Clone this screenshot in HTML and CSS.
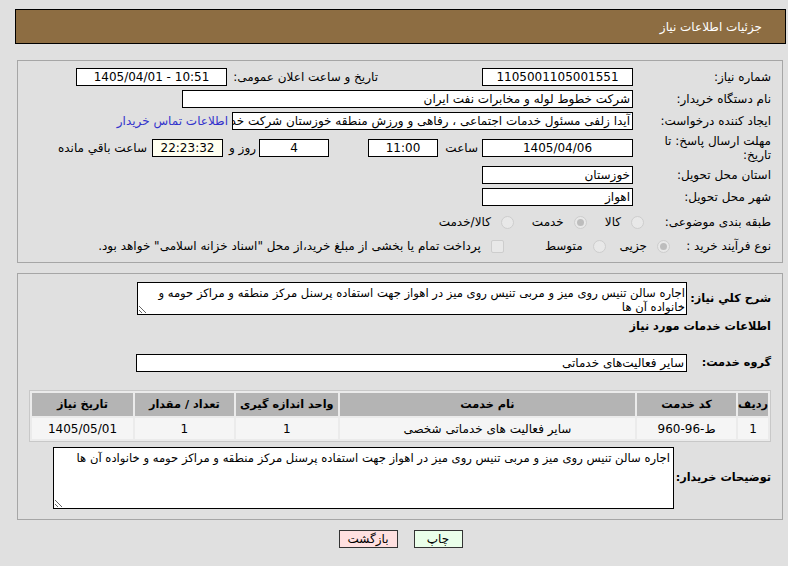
FILE: index.html
```html
<!DOCTYPE html>
<html lang="fa" dir="rtl">
<head>
    <meta charset="UTF-8">
    <title>جزئیات اطلاعات نیاز</title>
    <link rel="stylesheet" href="styles.css">
</head>
<body>
    <div class="page">
        <div class="header"><span>جزئیات اطلاعات نیاز</span></div>

        <div class="panel info">
            <div class="row">
                <span class="lbl">شماره نیاز:</span>
                <span class="box w149 center">1105001105001551</span>
                <span class="lbl lbl-date">تاریخ و ساعت اعلان عمومی:</span>
                <span class="box w149 center" dir="ltr">1405/04/01 - 10:51</span>
            </div>
            <div class="row">
                <span class="lbl">نام دستگاه خریدار:</span>
                <span class="box w449">شرکت خطوط لوله و مخابرات نفت ایران</span>
            </div>
            <div class="row">
                <span class="lbl">ایجاد کننده درخواست:</span>
                <span class="box w399">آیدا زلفی مسئول خدمات اجتماعی ، رفاهی و ورزش منطقه خوزستان شرکت خدمات پشتیبانی</span>
                <a class="contact" href="#">اطلاعات تماس خریدار</a>
            </div>
            <div class="row tall">
                <span class="lbl">مهلت ارسال پاسخ: تا تاریخ:</span>
                <span class="box w149 center">1405/04/06</span>
                <span class="mini">ساعت</span>
                <span class="box w68 center">11:00</span>
                <span class="box w68 center gap">4</span>
                <span class="mini days">روز و</span>
                <span class="box w69 center remain">22:23:32</span>
                <span class="left-text">ساعت باقي مانده</span>
            </div>
            <div class="row">
                <span class="lbl">استان محل تحویل:</span>
                <span class="box w149">خوزستان</span>
            </div>
            <div class="row">
                <span class="lbl">شهر محل تحویل:</span>
                <span class="box w149">اهواز</span>
            </div>
            <div class="row choice first-choice">
                <span class="lbl">طبقه بندی موضوعی:</span>
                <div class="opts cat">
                    <label class="opt"><input type="radio" class="radio" disabled>کالا</label>
                    <label class="opt"><input type="radio" class="radio" checked disabled>خدمت</label>
                    <label class="opt"><input type="radio" class="radio" disabled>کالا/خدمت</label>
                </div>
            </div>
            <div class="row choice last">
                <span class="lbl">نوع فرآیند خرید :</span>
                <div class="opts proc">
                    <label class="opt"><input type="radio" class="radio" checked disabled>جزیی</label>
                    <label class="opt wide"><input type="radio" class="radio" disabled>متوسط</label>
                    <label class="opt"><input type="checkbox" class="check" disabled>پرداخت تمام یا بخشی از مبلغ خرید،از محل "اسناد خزانه اسلامی" خواهد بود.</label>
                </div>
            </div>
        </div>

        <div class="panel detail">
            <div class="row">
                <span class="lbl bold w84">شرح کلي نیاز:</span>
                <textarea class="area desc" readonly>اجاره سالن تنیس روی میز و مربی تنیس روی میز در اهواز جهت استفاده پرسنل مرکز منطقه و مراکز حومه و خانواده آن ها</textarea>
            </div>
            <div class="section-title">اطلاعات خدمات مورد نیاز</div>
            <div class="row">
                <span class="lbl bold w84">گروه خدمت:</span>
                <span class="box w549">سایر فعالیت‌های خدماتی</span>
            </div>

            <table class="items">
                <thead>
                    <tr>
                        <th class="c-idx">ردیف</th>
                        <th class="c-code">کد خدمت</th>
                        <th class="c-name">نام خدمت</th>
                        <th class="c-unit">واحد اندازه گیری</th>
                        <th class="c-qty">تعداد / مقدار</th>
                        <th class="c-date">تاریخ نیاز</th>
                    </tr>
                </thead>
                <tbody>
                    <tr>
                        <td>1</td>
                        <td><bdo dir="ltr">960-96-ط</bdo></td>
                        <td>سایر فعالیت های خدماتی شخصی</td>
                        <td>1</td>
                        <td>1</td>
                        <td>1405/05/01</td>
                    </tr>
                </tbody>
            </table>

            <div class="row last">
                <span class="lbl bold w93">توضیحات خریدار:</span>
                <textarea class="area notes" readonly>اجاره سالن تنیس روی میز و مربی تنیس روی میز در اهواز جهت استفاده پرسنل مرکز منطقه و مراکز حومه و خانواده آن ها</textarea>
            </div>
        </div>

        <div class="actions">
            <button class="btn print">چاپ</button>
            <button class="btn back">بازگشت</button>
        </div>
    </div>
</body>
</html>
```

FILE: styles.css
```css
body {
    margin: 0;
    background: #e0e0e0;
    font-family: "DejaVu Sans", sans-serif;
    font-size: 12px;
    color: #000;
}

.page {
    padding: 9px 2px 0 15px;
}

.header {
    height: 33px;
    background: #8d6d42;
    border: 1px solid #000;
    display: flex;
    align-items: center;
    padding-right: 23px;
    color: #fff;
    font-size: 12px;
}

.panel {
    border: 1px solid #a6a6a6;
    margin-left: 2px;
    margin-right: 3px;
    padding: 7px 11px 6px 10px;
}

.info {
    margin-top: 16px;
}

.detail {
    margin-top: 10px;
    padding-top: 8px;
    padding-bottom: 10px;
}

.row {
    display: flex;
    align-items: center;
    min-height: 18px;
    margin-bottom: 4px;
}

.row.last {
    margin-bottom: 0;
}

.row.tall {
    min-height: 28px;
}

.row.choice {
    min-height: 20px;
}

.row.first-choice {
    margin-top: 6px;
}

.lbl {
    width: 134px;
    flex-shrink: 0;
    margin-left: 4px;
    line-height: 14px;
}

.lbl-date {
    width: 147px;
    margin-right: 104px;
    margin-left: 4px;
}

.box {
    display: block;
    height: 16px;
    line-height: 16px;
    border: 1px solid #000;
    background: #fff;
    padding: 0 2px;
    white-space: nowrap;
    overflow: hidden;
    box-sizing: content-box;
}

.center {
    text-align: center;
}

.w149 { width: 145px; }
.w449 { width: 445px; }
.w399 { width: 395px; }
.w68 { width: 64px; }
.w69 { width: 65px; }
.w549 { width: 545px; }

.gap {
    margin-right: 39px;
}

.remain {
    background: #fffff0;
}

.mini {
    width: 44px;
    padding-right: 4px;
    box-sizing: border-box;
}

.days {
    width: 36px;
    padding-right: 3px;
}

.left-text {
    margin-right: 5px;
}

.contact {
    color: #3333cc;
    text-decoration: none;
    margin-right: 4px;
    white-space: nowrap;
}

.opts {
    display: flex;
    align-items: center;
    height: 20px;
}

.opt {
    display: flex;
    align-items: center;
    white-space: nowrap;
}

.cat {
    margin-right: -11px;
}

.cat .opt {
    margin-left: 18px;
}

.proc {
    margin-right: -37px;
}

.proc .opt {
    margin-left: 14px;
}

.proc .opt.wide {
    margin-left: 41px;
}

.radio,
.check {
    appearance: none;
    -webkit-appearance: none;
    width: 13px;
    height: 13px;
    margin: 0 0 0 10px;
    border: 1px solid #cdcdcd;
    background: #e8e8e8;
    box-sizing: border-box;
    position: relative;
}

.radio {
    border-radius: 50%;
}

.check {
    border-radius: 2px;
}

.radio:checked::after {
    content: "";
    position: absolute;
    top: 2px;
    left: 2px;
    width: 7px;
    height: 7px;
    border-radius: 50%;
    background: #bdbdbd;
}

.bold {
    font-weight: bold;
    font-size: 11.3px;
    white-space: nowrap;
}

.w84 { width: 80px; }
.w93 { width: 93px; }

.area {
    font-family: "DejaVu Sans", sans-serif;
    font-size: 11.6px;
    line-height: 14px;
    border: 1px solid #000;
    background: #fff;
    padding: 3px 1px 0;
    margin: 0;
    direction: rtl;
    overflow: hidden;
}

.desc {
    width: 546px;
    height: 28px;
}

.notes {
    width: 615px;
    height: 57px;
    padding-right: 3px;
}

.section-title {
    font-weight: bold;
    font-size: 11.3px;
    line-height: 16px;
    margin: 1px 0 19px;
}

.items {
    border: 1px solid #c8c8c8;
    border-spacing: 2px;
    background: #ebebeb;
    margin: 18px 0 5px 14px;
    width: 742px;
    font-size: 12px;
}

.items th {
    background: #b4b4b4;
    height: 23px;
    padding: 0;
    font-size: 11.3px;
}

.items td {
    background: #f5f5f5;
    height: 21px;
    padding: 0;
    text-align: center;
}

.c-idx { width: 29px; }
.c-code { width: 99px; }
.c-name { width: 296px; }
.c-unit { width: 102px; }
.c-qty { width: 99px; }
.c-date { width: 101px; }

.actions {
    display: flex;
    justify-content: center;
    gap: 16px;
    margin-top: 10px;
}

.btn {
    font-family: "DejaVu Sans", sans-serif;
    font-size: 12px;
    height: 18px;
    padding: 0;
    border: 1px solid #333;
    color: #000;
}

.print {
    width: 49px;
    background: #eaffea;
}

.back {
    width: 59px;
    background: #ffe0e0;
}
```
